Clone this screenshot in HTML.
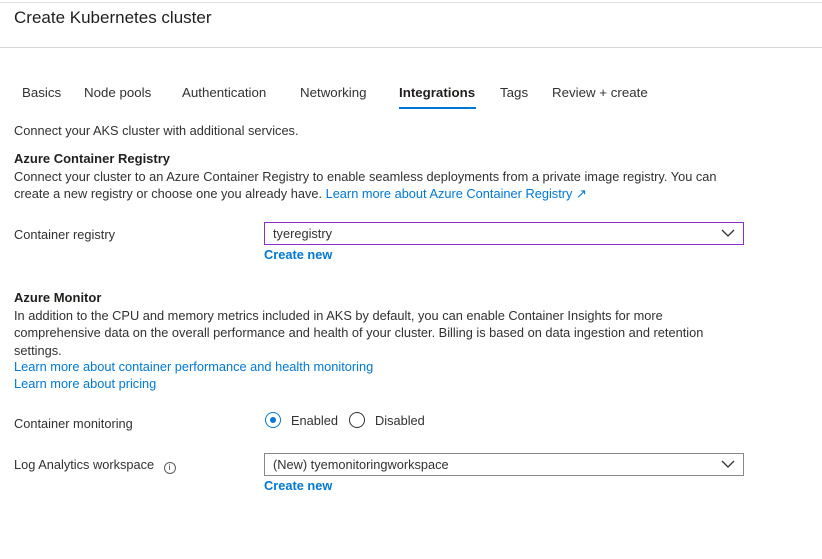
<!DOCTYPE html>
<html><head><style>
body{margin:0;width:822px;height:559px;background:#fff;font-family:"Liberation Sans",sans-serif;color:#323130;font-size:12.8px;position:relative;overflow:hidden}
.a{position:absolute;white-space:nowrap;line-height:17px}
.l{color:#0078d4}
.dd{position:absolute;left:264px;width:478px;height:21px;border:1px solid #8a8886;}
.dd span{position:absolute;left:8px;top:3px;font-size:12.8px}
.dd svg{position:absolute;right:8px;top:6px}
.r{position:absolute;width:16px;height:16px;border-radius:50%;box-sizing:border-box}
</style></head><body>
<div style="position:absolute;left:0;top:2px;width:822px;height:1px;background:#e1dfdd"></div>
<div class="a" style="left:14px;top:8px;font-size:17px;line-height:20px;color:#201f1e">Create Kubernetes cluster</div>
<div style="position:absolute;left:0;top:47px;width:822px;height:1px;background:#d6d6d6"></div>
<div class="a" style="left:22px;top:84px;font-size:13.3px">Basics</div>
<div class="a" style="left:84px;top:84px;font-size:13.3px">Node pools</div>
<div class="a" style="left:182px;top:84px;font-size:13.3px">Authentication</div>
<div class="a" style="left:300px;top:84px;font-size:13.3px">Networking</div>
<div class="a" style="left:399px;top:84px;font-size:13.3px;font-weight:bold;color:#201f1e">Integrations</div>
<div style="position:absolute;left:399px;top:107px;width:77px;height:2px;background:#0078d4"></div>
<div class="a" style="left:500px;top:84px;font-size:13.3px">Tags</div>
<div class="a" style="left:552px;top:84px;font-size:13.3px">Review + create</div>
<div class="a" style="left:14px;top:122px">Connect your AKS cluster with additional services.</div>
<div class="a" style="left:14px;top:150px;font-size:13px;font-weight:bold;color:#201f1e">Azure Container Registry</div>
<div class="a" style="left:14px;top:168px">Connect your cluster to an Azure Container Registry to enable seamless deployments from a private image registry. You can</div>
<div class="a" style="left:14px;top:185px">create a new registry or choose one you already have. <span class="l">Learn more about Azure Container Registry ↗</span></div>
<div class="a" style="left:14px;top:226px">Container registry</div>
<div class="dd" style="top:222px;border-color:#8c2ec0"><span>tyeregistry</span><svg width="14" height="9"><path d="M1 1l6 6 6-6" fill="none" stroke="#323130" stroke-width="1.3"/></svg></div>
<div class="a l" style="left:264px;top:246px;font-weight:bold">Create new</div>
<div class="a" style="left:14px;top:289px;font-size:13px;font-weight:bold;color:#201f1e">Azure Monitor</div>
<div class="a" style="left:14px;top:307px">In addition to the CPU and memory metrics included in AKS by default, you can enable Container Insights for more</div>
<div class="a" style="left:14px;top:324px">comprehensive data on the overall performance and health of your cluster. Billing is based on data ingestion and retention</div>
<div class="a" style="left:14px;top:342px">settings.</div>
<div class="a l" style="left:14px;top:358px">Learn more about container performance and health monitoring</div>
<div class="a l" style="left:14px;top:375px">Learn more about pricing</div>
<div class="a" style="left:14px;top:415px">Container monitoring</div>
<div class="r" style="left:265px;top:412px;border:1px solid #0078d4"><div style="position:absolute;left:4px;top:4px;width:6px;height:6px;border-radius:50%;background:#0078d4"></div></div>
<div class="a" style="left:291px;top:412px">Enabled</div>
<div class="r" style="left:349px;top:412px;border:1px solid #323130"></div>
<div class="a" style="left:375px;top:412px">Disabled</div>
<div class="a" style="left:14px;top:456px">Log Analytics workspace <span style="display:inline-block;width:10px;height:10px;border:1px solid #605e5c;border-radius:50%;font-size:8px;line-height:10px;text-align:center;margin-left:6px;vertical-align:-1px">i</span></div>
<div class="dd" style="top:453px"><span>(New) tyemonitoringworkspace</span><svg width="14" height="9"><path d="M1 1l6 6 6-6" fill="none" stroke="#323130" stroke-width="1.3"/></svg></div>
<div class="a l" style="left:264px;top:477px;font-weight:bold">Create new</div>
</body></html>
